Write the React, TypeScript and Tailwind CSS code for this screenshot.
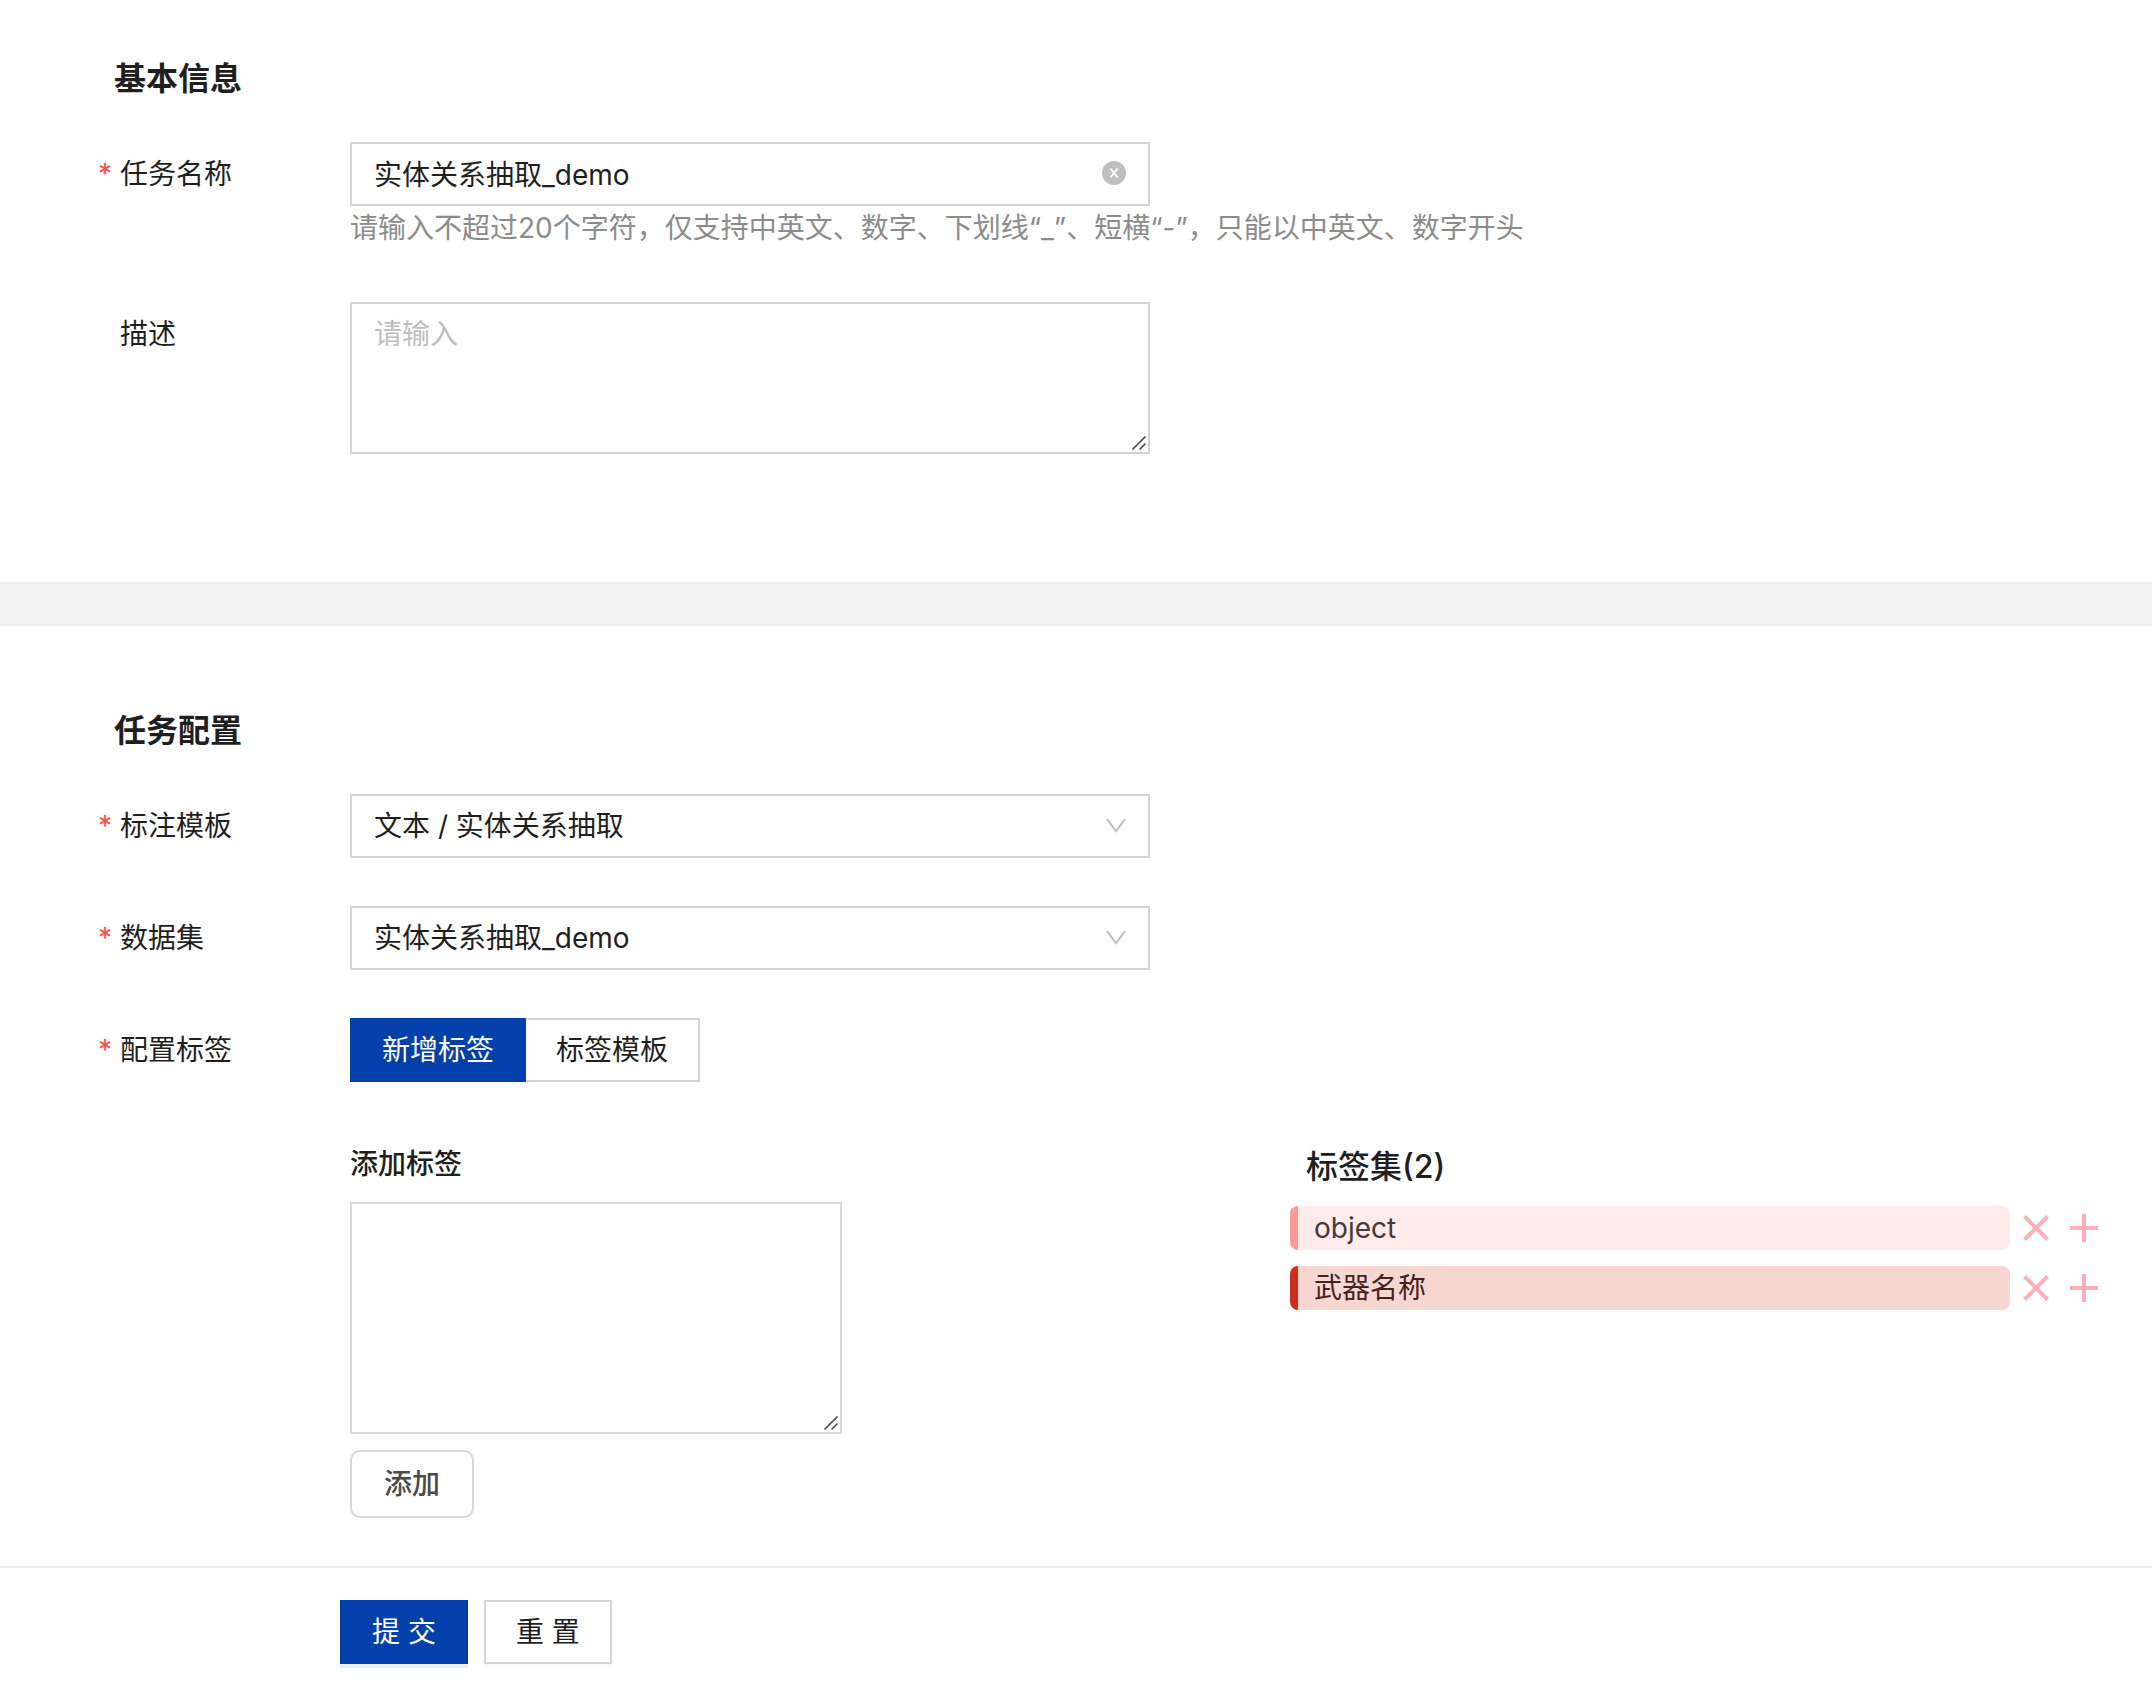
import { useState } from 'react';
import type { ReactNode } from 'react';
import clsx from 'clsx';

interface FormRowProps {
  label: string;
  htmlFor?: string;
  required?: boolean;
  children: ReactNode;
}

const FormRow = ({ label, htmlFor, required = false, children }: FormRowProps) => {
  return (
    <div className="flex items-start">
      <label htmlFor={htmlFor} className="flex h-16 w-[350px] shrink-0 items-center pl-[98px]">
        <span className="w-[22px] text-[#ff4d4f]">{required ? '*' : ''}</span>
        {label}
      </label>
      <div className="min-w-0 flex-1">{children}</div>
    </div>
  );
};

const ResizeGrip = () => (
  <svg
    className="pointer-events-none absolute right-1 bottom-1 h-[14px] w-[14px]"
    viewBox="0 0 14 14"
    fill="none"
    stroke="#555555"
    strokeWidth="1.6"
  >
    <path d="M0.5 13.5 13.5 0.5M7.5 13.5l6-6" />
  </svg>
);

interface SelectBoxProps {
  id: string;
  options: string[];
}

const SelectBox = ({ id, options }: SelectBoxProps) => (
  <div className="relative max-w-[800px]">
    <select
      id={id}
      className="h-16 w-full appearance-none border-2 border-[#d4d4d4] bg-white px-[22px] outline-none"
    >
      {options.map((option) => (
        <option key={option}>{option}</option>
      ))}
    </select>
    <svg
      className="pointer-events-none absolute top-6 right-6 h-4 w-5"
      viewBox="0 0 20 16"
      fill="none"
      stroke="#bfbfbf"
      strokeWidth="2"
    >
      <path d="M1 1.2 10 13.2 19 1.2" />
    </svg>
  </div>
);

const tabs = ['新增标签', '标签模板'];

const initialTags = [
  { name: 'object', row: 'border-[#ff9995] bg-[#ffebea] text-[#4c3838]' },
  { name: '武器名称', row: 'border-[#cd2f1a] bg-[#f5d6d1] text-[#43211d]' },
];

const App = () => {
  const [taskName, setTaskName] = useState('实体关系抽取_demo');
  const [tab, setTab] = useState(tabs[0]);
  const [tags, setTags] = useState(initialTags);

  return (
    <form
      className="bg-white font-[Inter,'Noto_Sans_CJK_SC',sans-serif] text-[28px] leading-[44px] text-[#1f1f1f]"
      onSubmit={(e) => e.preventDefault()}
    >
      {/* Basic info */}
      <section className="pt-14 pb-32">
        <h2 className="mb-10 pl-[114px] text-[32px] leading-[46px] font-bold">基本信息</h2>
        <FormRow label="任务名称" htmlFor="task-name" required>
          <div className="relative max-w-[800px]">
            <input
              id="task-name"
              type="text"
              value={taskName}
              onChange={(e) => setTaskName(e.target.value)}
              className="h-16 w-full border-2 border-[#d4d4d4] bg-white pr-16 pb-0.5 pl-[22px] outline-none"
            />
            <button
              type="button"
              aria-label="清空"
              onClick={() => setTaskName('')}
              className="absolute top-[19px] right-6 h-6 w-6"
            >
              <svg viewBox="0 0 24 24" fill="none">
                <circle cx="12" cy="12" r="12" fill="#bfbfbf" />
                <path d="M8.3 7.5l7.4 9M15.7 7.5l-7.4 9" stroke="#ffffff" strokeWidth="1.9" />
              </svg>
            </button>
          </div>
          <p className="text-[#8c8c8c]">
            请输入不超过20个字符，仅支持中英文、数字、下划线“_”、短横“-”，只能以中英文、数字开头
          </p>
        </FormRow>
        <div className="h-[52px]" />
        <FormRow label="描述" htmlFor="task-desc">
          <div className="relative max-w-[800px]">
            <textarea
              id="task-desc"
              placeholder="请输入"
              className="block h-[152px] w-full resize-none border-2 border-[#d4d4d4] px-[22px] py-2 outline-none placeholder:text-[#bfbfbf]"
            />
            <ResizeGrip />
          </div>
        </FormRow>
      </section>

      <div className="h-11 border-y-2 border-[#ececec] bg-[#f2f2f2]" />

      {/* Task config */}
      <section className="pt-[82px] pb-12">
        <h2 className="mb-10 pl-[114px] text-[32px] leading-[46px] font-bold">任务配置</h2>
        <div className="flex flex-col gap-12">
          <FormRow label="标注模板" htmlFor="template" required>
            <SelectBox id="template" options={['文本 / 实体关系抽取']} />
          </FormRow>
          <FormRow label="数据集" htmlFor="dataset" required>
            <SelectBox id="dataset" options={['实体关系抽取_demo']} />
          </FormRow>
          <FormRow label="配置标签" required>
            <div className="flex" role="radiogroup" aria-label="配置标签">
              {tabs.map((item) => (
                <label
                  key={item}
                  className={clsx(
                    'flex h-16 cursor-pointer items-center border-y-2 px-[30px]',
                    tab === item
                      ? 'border-x-2 border-[#0440ab] bg-[#0440ab] text-white'
                      : 'border-r-2 border-[#d4d4d4]'
                  )}
                >
                  <input
                    type="radio"
                    name="tag-source"
                    className="sr-only"
                    checked={tab === item}
                    onChange={() => setTab(item)}
                  />
                  {item}
                </label>
              ))}
            </div>
          </FormRow>
        </div>

        <div className="mt-[60px] flex items-start pr-[54px] pl-[350px]">
          <div className="w-[940px] shrink-0">
            <label htmlFor="new-tags" className="block font-medium">
              添加标签
            </label>
            <div className="relative mt-4 w-[492px]">
              <textarea
                id="new-tags"
                className="block h-[232px] w-full resize-none border-2 border-[#d9d9d9] px-[22px] py-2 outline-none"
              />
              <ResizeGrip />
            </div>
            <button
              type="button"
              className="mt-4 block h-[68px] rounded-[10px] border-2 border-[#d9d9d9] px-8 font-medium text-[#4a4a4a]"
            >
              添加
            </button>
          </div>

          <div className="min-w-0 flex-1">
            <h3 className="pt-0.5 pl-4 text-[32px] leading-[46px] font-medium">
              标签集({tags.length})
            </h3>
            <ul className="mt-4 flex flex-col gap-4">
              {tags.map((tag) => (
                <li key={tag.name} className="flex items-center">
                  <span className={clsx('h-11 flex-1 rounded-lg border-l-8 pl-4', tag.row)}>
                    {tag.name}
                  </span>
                  <button
                    type="button"
                    aria-label={`删除 ${tag.name}`}
                    onClick={() => setTags(tags.filter((t) => t.name !== tag.name))}
                    className="ml-3 h-7 w-7"
                  >
                    <svg viewBox="0 0 28 28" fill="none" stroke="#ffb0b6" strokeWidth="4">
                      <path d="M2.5 2.5l23 23M25.5 2.5l-23 23" />
                    </svg>
                  </button>
                  <button type="button" aria-label={`添加 ${tag.name}`} className="ml-5 h-7 w-7">
                    <svg viewBox="0 0 28 28" fill="none" stroke="#ffb0b6" strokeWidth="4">
                      <path d="M14 0v28M0 14h28" />
                    </svg>
                  </button>
                </li>
              ))}
            </ul>
          </div>
        </div>
      </section>

      {/* Footer actions */}
      <footer className="flex gap-4 border-t-2 border-[#eeeeee] pt-8 pb-[22px] pl-[340px]">
        <button
          type="submit"
          className="h-16 bg-[#0440ab] px-8 text-white shadow-[0_4px_0_#e8f0fa]"
        >
          提 交
        </button>
        <button
          type="button"
          className="h-16 border-2 border-[#d4d4d4] bg-white px-[30px] shadow-[0_4px_0_#fafafa]"
        >
          重 置
        </button>
      </footer>
    </form>
  );
};

export default App;
